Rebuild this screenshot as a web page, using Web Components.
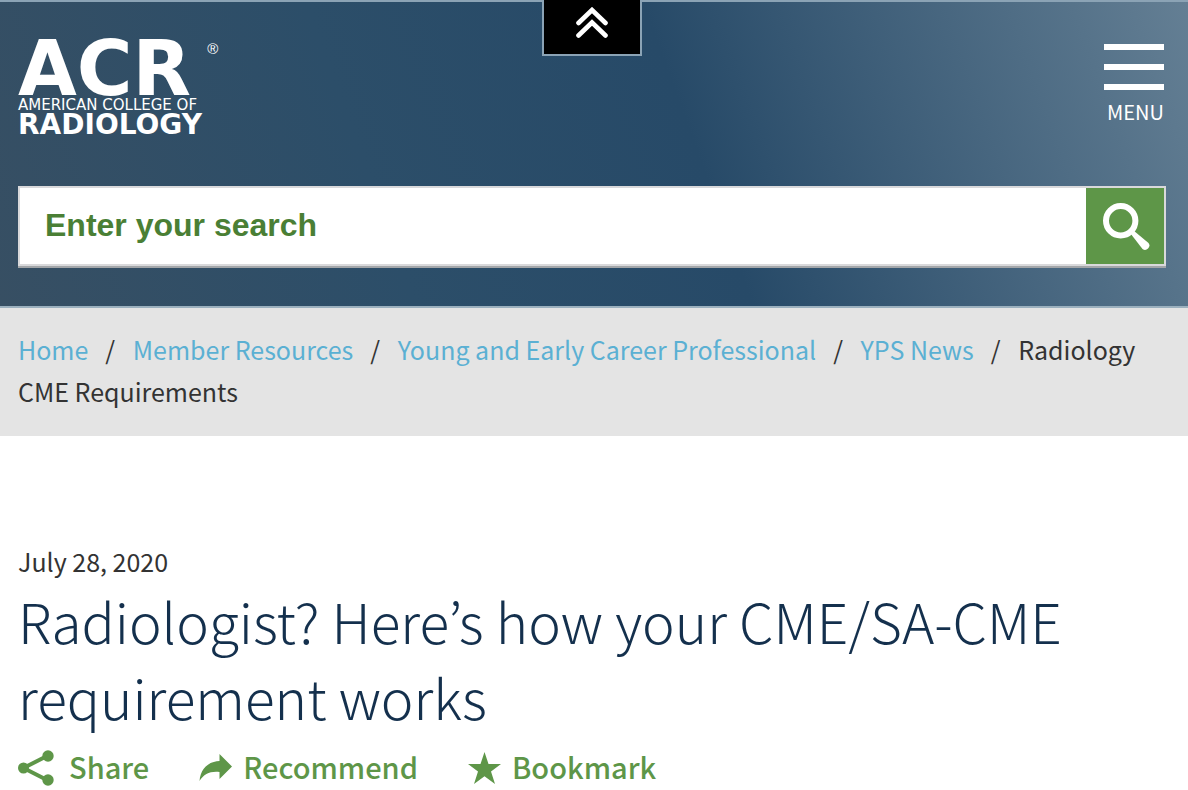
<!DOCTYPE html>
<html lang="en">
<head>
<meta charset="utf-8">
<meta name="viewport" content="width=device-width, initial-scale=1">
<title>Radiology CME Requirements | American College of Radiology</title>
<style>
  body {
    margin: 0;
    background: #fff;
    color: #333;
    font-family: "Noto Sans CJK KR", "Noto Sans", sans-serif;
    font-size: 25px;
    line-height: 42px;
    --edge: #8ba3b5;
    --green: #5e9648;
    --gutter: 18px;
  }
</style>
</head>
<body>
<site-header>
  <panel-toggle slot="toggle"></panel-toggle>
  <acr-logo slot="logo"></acr-logo>
  <menu-button slot="menu">MENU</menu-button>
  <site-search slot="search" placeholder="Enter your search"></site-search>
</site-header>
<bread-crumbs>
  <bread-crumb href="#home">Home</bread-crumb>
  <bread-crumb href="#resources">Member Resources</bread-crumb>
  <bread-crumb href="#yps">Young and Early Career Professional</bread-crumb>
  <bread-crumb href="#news">YPS News</bread-crumb>
  <bread-crumb>Radiology CME Requirements</bread-crumb>
</bread-crumbs>
<news-article>
  <time slot="date" datetime="2020-07-28">July 28, 2020</time>
  <span slot="title">Radiologist? Here’s how your CME/SA-CME requirement works</span>
  <article-action slot="actions" icon="share">Share</article-action>
  <article-action slot="actions" icon="recommend">Recommend</article-action>
  <article-action slot="actions" icon="bookmark">Bookmark</article-action>
</news-article>

<script>
class BaseElement extends HTMLElement {
  render(html) {
    this.attachShadow({ mode: "open" }).innerHTML = html;
  }
}

customElements.define("site-header", class extends BaseElement {
  connectedCallback() {
    this.render(`
      <style>
        :host { display: block; }
        header {
          position: relative;
          display: flex;
          flex-direction: column;
          gap: 50px;
          padding: 40px 22px 40px var(--gutter);
          border-top: 2px solid var(--edge);
          border-bottom: 2px solid #9bb0be;
          background: linear-gradient(70deg, #374f63 0%, #2c4e69 32%, #274a68 58%, #56738a 91%, #647f94 100%);
        }
        .row { display: flex; justify-content: space-between; align-items: flex-start; }
      </style>
      <header>
        <slot name="toggle"></slot>
        <div class="row"><slot name="logo"></slot><slot name="menu"></slot></div>
        <slot name="search"></slot>
      </header>`);
  }
});

customElements.define("panel-toggle", class extends BaseElement {
  connectedCallback() {
    this.render(`
      <style>
        :host { position: absolute; top: -2px; left: 0; right: 4px; display: flex; justify-content: center; }
        button {
          display: flex; justify-content: center; align-items: center;
          width: 100px; height: 56px; padding: 0 0 8px;
          border: 2px solid var(--edge); border-top: 0;
          box-sizing: border-box;
          background: #000; cursor: pointer;
        }
      </style>
      <button type="button" aria-label="Open top panel">
        <svg width="32" height="32" viewBox="0 0 32 32" fill="none" stroke="#fff" stroke-width="4.600" stroke-linecap="round">
          <path d="M2.500 16 16 3l13.500 13M2.500 28.500 16 15.500l13.500 13"/>
        </svg>
      </button>`);
  }
});

customElements.define("acr-logo", class extends BaseElement {
  connectedCallback() {
    this.render(`
      <style>
        :host { display: block; }
        a {
          display: flex; flex-direction: column;
          color: #fff; text-decoration: none;
          font-family: "DejaVu Sans", sans-serif;
          white-space: nowrap;
        }
        .mark { display: flex; gap: 16px; font-size: 76px; font-weight: 700; line-height: 54px; }
        .reg { font-family: "Liberation Sans", sans-serif; font-size: 15px; font-weight: 400; line-height: 14px; }
        .top, .bottom { text-transform: uppercase; }
        .top { font-size: 15px; line-height: 18px; }
        .bottom { font-size: 28px; font-weight: 700; line-height: 22px; }
      </style>
      <a href="#home">
        <span class="mark">ACR<span class="reg">®</span></span>
        <span class="top">American College of</span>
        <span class="bottom">Radiology</span>
      </a>`);
  }
});

customElements.define("menu-button", class extends BaseElement {
  connectedCallback() {
    this.render(`
      <style>
        :host { display: block; }
        button {
          display: flex; flex-direction: column; align-items: flex-end; gap: 8px;
          padding: 2px 2px 0; border: 0; background: none; cursor: pointer;
          color: #fff; font: inherit; font-size: 20px; line-height: 28px;
        }
      </style>
      <button type="button">
        <svg width="60" height="46" viewBox="0 0 60 46" fill="#fff" aria-hidden="true">
          <path d="M0 0h60v6H0zM0 20h60v6H0zM0 40h60v6H0z"/>
        </svg>
        <slot></slot>
      </button>`);
  }
});

customElements.define("site-search", class extends BaseElement {
  connectedCallback() {
    this.render(`
      <style>
        :host { display: block; }
        form { display: flex; height: 76px; border: 2px solid #d9d9db; box-shadow: 0 2px #a3a6a9; }
        input {
          flex: 1; min-width: 0; padding: 0 25px 2px; border: 0; border-radius: 0; outline: 0;
          background: #fff; color: #4a7f35;
          font: 700 32px "Liberation Sans", Arial, sans-serif;
        }
        input::placeholder { color: #4a7f35; opacity: 1; }
        button {
          display: flex; justify-content: center; align-items: center;
          width: 78px; padding: 0 0 0 2px; border: 0; background: var(--green); cursor: pointer;
        }
      </style>
      <form role="search">
        <input type="search" aria-label="${this.getAttribute("placeholder")}" placeholder="${this.getAttribute("placeholder")}">
        <button type="submit" aria-label="Search">
          <svg width="48" height="48" viewBox="0 0 48 48" fill="#fff">
            <circle cx="18.700" cy="18.700" r="14.700" fill="none" stroke="#fff" stroke-width="6"/>
            <path d="M28.500 31.500 31.500 28.500 46.500 41a4.300 4.300 0 0 1-6 6z"/>
          </svg>
        </button>
      </form>`);
  }
});

customElements.define("bread-crumbs", class extends BaseElement {
  connectedCallback() {
    this.render(`
      <style>
        :host { display: block; padding: 20px var(--gutter) 24px; background: #e4e4e4; }
        nav { display: block; }
      </style>
      <nav aria-label="Breadcrumb"><slot></slot></nav>`);
  }
});

customElements.define("bread-crumb", class extends BaseElement {
  connectedCallback() {
    const href = this.getAttribute("href");
    this.render(`
      <style>
        :host { display: inline; }
        a { color: #5bb0d3; text-decoration: none; }
        .slash { margin: 0 12px 0 17px; }
      </style>` + (href
        ? `<a href="${href}"><slot></slot></a><span class="slash">/</span>`
        : `<span aria-current="page"><slot></slot></span>`));
  }
});

customElements.define("news-article", class extends BaseElement {
  connectedCallback() {
    this.render(`
      <style>
        :host { display: block; padding: 104px var(--gutter) 0; }
        h1 { margin: 0 0 14px; color: #14304d; font-size: 55px; font-weight: 300; line-height: 76px; }
        .actions { display: flex; flex-wrap: wrap; gap: 50px; }
      </style>
      <article>
        <slot name="date"></slot>
        <h1><slot name="title"></slot></h1>
        <div class="actions"><slot name="actions"></slot></div>
      </article>`);
  }
});

// All action icons share one 36px-high box, so their rows line up.
const ACTION_ICONS = {
  share: `<svg width="40" height="36" viewBox="0 0 40 36"><path d="M30 5.500 5.500 18 30 30.500" fill="none" stroke="currentColor" stroke-width="4"/><circle cx="5.500" cy="18" r="5.500"/><circle cx="30" cy="6" r="5.700"/><circle cx="30" cy="30" r="5.700"/></svg>`,
  recommend: `<svg width="33" height="36" viewBox="0 -4 33 36"><path d="M20.500 0 33 12.500 20.500 25V18C11 17 5 20 .500 27 1.500 15 9 7.500 20.500 7z"/></svg>`,
  bookmark: `<svg width="33" height="36" viewBox="0 -2 33 36"><path d="m16.500 0 4 12H33l-10 7.500L27 32l-10.500-7.700L6 32l4-12.500L0 12h12.500z"/></svg>`
};

customElements.define("article-action", class extends BaseElement {
  connectedCallback() {
    this.render(`
      <style>
        :host { display: block; }
        button {
          display: flex; align-items: flex-start; gap: 11px; padding: 0; border: 0;
          background: none; color: var(--green); cursor: pointer;
          font: inherit; font-size: 29px; font-weight: 500; line-height: 36px;
        }
        svg { flex: none; margin-top: 2px; fill: currentColor; }
      </style>
      <button type="button">${ACTION_ICONS[this.getAttribute("icon")]}<span><slot></slot></span></button>`);
  }
});
</script>
</body>
</html>
